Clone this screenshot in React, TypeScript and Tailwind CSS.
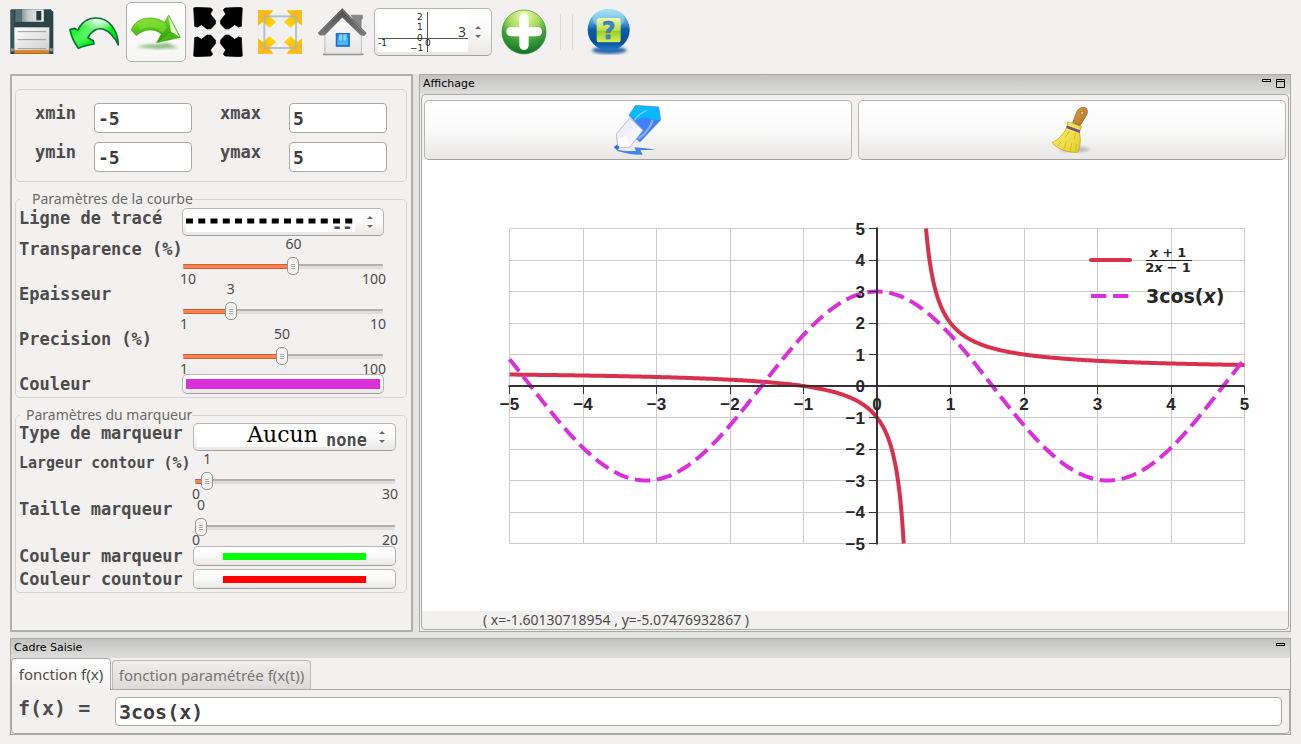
import { useState } from "react";
import type { ReactNode } from "react";

const mono = "font-['DejaVu_Sans_Mono',monospace] font-bold whitespace-nowrap text-[#4c4c4c]";
const raised =
  "rounded-[5px] border border-[#b8b6b3] border-b-[#a3a19e] bg-linear-to-b from-white via-[#fafafa] to-[#e8e7e5]";
const field =
  "min-w-0 rounded-[4px] border border-[#aaa8a5] bg-white px-[3px] font-['DejaVu_Sans_Mono',monospace] font-bold text-[#3c3c3c] outline-none";

/* ---------- icons ---------- */

function SaveIcon() {
  return (
    <svg width="44" height="46" viewBox="32 32 132 138">
      <defs>
        <linearGradient id="shutter" x1="0" x2="1">
          <stop offset="0" stopColor="#8d9a9a" />
          <stop offset=".3" stopColor="#c9cdcd" />
          <stop offset="1" stopColor="#f4f4f4" />
        </linearGradient>
        <linearGradient id="paper" x1="0" y1="0" x2="1" y2="1">
          <stop offset="0" stopColor="#fff" />
          <stop offset="1" stopColor="#cfcfcf" />
        </linearGradient>
      </defs>
      <path d="M36 33H154L162 41V167H33V36Z" fill="#2c4446" />
      <path d="M36 36H44V160H36Z" fill="#395658" />
      <rect x="48" y="33" width="86" height="38" fill="#557072" />
      <rect x="68" y="33" width="65" height="37" fill="url(#shutter)" />
      <rect x="111" y="38" width="15" height="28" fill="#2b3a3c" />
      <rect x="45" y="87" width="105" height="70" fill="url(#paper)" />
      <path d="M55 100H140M55 124H140M55 151H140" stroke="#9a9a9a" strokeWidth="3" />
      <rect x="45" y="156" width="105" height="10" fill="#e5801c" />
      <rect x="35" y="150" width="8" height="9" fill="#8fa0a0" />
      <rect x="152" y="150" width="8" height="9" fill="#8fa0a0" />
    </svg>
  );
}

function UndoIcon() {
  return (
    <svg width="50" height="34" viewBox="206 44 150 102">
      <defs>
        <linearGradient id="undo" x1="0" y1="1" x2=".7" y2="0">
          <stop offset=".2" stopColor="#00f80c" />
          <stop offset=".62" stopColor="#45f04e" />
          <stop offset=".85" stopColor="#d9fbd9" />
        </linearGradient>
        <linearGradient id="undoTail" x1="0" y1="0" x2="1" y2="1">
          <stop offset=".3" stopColor="#fff" stopOpacity="0" />
          <stop offset=".6" stopColor="#00ee10" />
        </linearGradient>
      </defs>
      <path
        d="M354 134C352 88 326 53 287 53C262 53 243 67 232 90L222 84L209 88C212 108 224 130 234 144C248 137 264 134 281 131L279 121L263 112C273 92 291 81 309 87C333 95 344 113 354 134Z"
        fill="url(#undo)"
      />
      <path
        d="M354 134C352 88 326 53 287 53C262 53 243 67 232 90L222 84L209 88C212 108 224 130 234 144C248 137 264 134 281 131L279 121L263 112C273 92 291 81 309 87C333 95 344 113 354 134Z"
        fill="url(#undoTail)"
        stroke="#0a6f3d"
        strokeWidth="5"
        strokeLinejoin="round"
      />
    </svg>
  );
}

function RedoIcon() {
  return (
    <svg width="52" height="40" viewBox="390 42 156 120">
      <defs>
        <linearGradient id="redo" x1="0" y1="0" x2=".3" y2="1">
          <stop offset="0" stopColor="#9be83a" />
          <stop offset=".5" stopColor="#58cc1a" />
          <stop offset="1" stopColor="#2f9a0c" />
        </linearGradient>
        <filter id="soft">
          <feGaussianBlur stdDeviation="4" />
        </filter>
      </defs>
      <path d="M408 147C440 136 470 142 500 134L536 150L470 153Z" fill="#8dbd80" filter="url(#soft)" />
      <path
        d="M393 96C404 70 427 58 453 60C474 61 487 69 494 73L506 51L541 118L470 134L484 108C462 90 432 92 409 113Z"
        fill="url(#redo)"
        stroke="#4aa81c"
        strokeWidth="2"
      />
      <path d="M412 74C440 56 470 64 494 76L500 90L488 104C466 84 440 84 420 96Z" fill="#8be63a" opacity=".55" />
      <path d="M505 53L513 101L539 118Z" fill="#e4f8c4" />
      <path d="M473 132L512 102L538 117Z" fill="#45b916" />
    </svg>
  );
}

const arrow =
  "M582 24L588 22L634 24L639 30L632 42L648 62L647 72L633 87L622 87L605 74L594 81L585 79Z";

function ExpandIcon() {
  return (
    <svg width="50" height="50" viewBox="580 21 150 150">
      <g stroke="#000" strokeWidth="2" strokeLinejoin="round">
        <path d={arrow} />
        <path d={arrow} transform="matrix(-1 0 0 1 1310 0)" />
        <path d={arrow} transform="matrix(1 0 0 -1 0 192)" />
        <path d={arrow} transform="matrix(-1 0 0 -1 1310 192)" />
      </g>
    </svg>
  );
}

const corner = "M774 29L821 30L807 46L828 65L808 83L789 64L774 76Z";

function FitIcon() {
  return (
    <svg width="46" height="46" viewBox="771 26 138 138">
      <defs>
        <linearGradient id="gold" x1="0" y1="0" x2="1" y2="1">
          <stop offset="0" stopColor="#ffb52e" />
          <stop offset=".4" stopColor="#fdbc0a" />
          <stop offset="1" stopColor="#ffe000" />
        </linearGradient>
      </defs>
      <g fill="url(#gold)">
        <path d={corner} />
        <path d={corner} transform="matrix(-1 0 0 1 1680 0)" />
        <path d={corner} transform="matrix(1 0 0 -1 0 190)" />
        <path d={corner} transform="matrix(-1 0 0 -1 1680 190)" />
      </g>
      <rect x="793" y="48" width="95" height="95" fill="none" stroke="#9fb3cb" strokeWidth="6" opacity=".75" />
    </svg>
  );
}

function HomeIcon() {
  return (
    <svg width="50" height="50" viewBox="20 21 152 150">
      <defs>
        <linearGradient id="wall" x1="0" y1="0" x2="0" y2="1">
          <stop offset="0" stopColor="#fff" />
          <stop offset="1" stopColor="#e6e6e6" />
        </linearGradient>
        <linearGradient id="pane" x1="0" y1="0" x2="0" y2="1">
          <stop offset="0" stopColor="#1f8de8" />
          <stop offset="1" stopColor="#48c8ff" />
        </linearGradient>
        <linearGradient id="roof" x1="0" y1="0" x2="0" y2="1">
          <stop offset="0" stopColor="#4c4c4c" />
          <stop offset="1" stopColor="#7c7c7c" />
        </linearGradient>
      </defs>
      <rect x="38" y="161" width="124" height="6" rx="3" fill="#8d8d8d" />
      <path d="M124 45H158V56H154V86L140 74Z" fill="#868a8a" stroke="#6e7272" strokeWidth="2" />
      <path d="M97 34L155 94V163H44V94Z" fill="url(#wall)" stroke="#a4a4a4" strokeWidth="2" />
      <path d="M97 24L171 99L164 108L152 106L97 52L44 106L29 107L22 99Z" fill="url(#roof)" />
      <path d="M97 29L161 94" stroke="#8f8f8f" strokeWidth="3" />
      <path d="M28 97L96 30" stroke="#777" strokeWidth="3" />
      <rect x="77" y="99" width="43" height="42" fill="#2b67cf" />
      <rect x="82" y="103" width="33" height="32" fill="url(#pane)" />
      <path d="M88 103H97V119L92 124L86 118ZM100 103H110V118L105 124L100 119Z" fill="#9fe2ff" opacity=".8" />
    </svg>
  );
}

function PlusIcon() {
  return (
    <svg width="46" height="46" viewBox="454 25 138 138">
      <defs>
        <radialGradient id="plus" cx=".5" cy=".12" r=".9">
          <stop offset="0" stopColor="#f0fbb0" />
          <stop offset=".4" stopColor="#a5d95c" />
          <stop offset=".65" stopColor="#3fa13b" />
          <stop offset="1" stopColor="#0f6d25" />
        </radialGradient>
      </defs>
      <circle cx="523" cy="94" r="66" fill="url(#plus)" stroke="#3f8c35" strokeWidth="2" />
      <path d="M484 93H563M523 53V134" stroke="#fff" strokeWidth="28" strokeLinecap="round" />
    </svg>
  );
}

function HelpIcon() {
  return (
    <svg width="46" height="50" viewBox="715 22 138 150">
      <defs>
        <linearGradient id="ball" x1="0" y1="0" x2="0" y2="1">
          <stop offset="0" stopColor="#9adcf5" />
          <stop offset=".35" stopColor="#3d97d6" />
          <stop offset=".5" stopColor="#0c5cab" />
          <stop offset=".8" stopColor="#0a4d99" />
          <stop offset="1" stopColor="#1b86cf" />
        </linearGradient>
        <linearGradient id="lime" x1="0" y1="0" x2="0" y2="1">
          <stop offset="0" stopColor="#eef9b4" />
          <stop offset=".5" stopColor="#b9e04c" />
          <stop offset=".55" stopColor="#9ccd1c" />
          <stop offset="1" stopColor="#d6ef62" />
        </linearGradient>
        <filter id="blurBall">
          <feGaussianBlur stdDeviation="4" />
        </filter>
      </defs>
      <ellipse cx="785" cy="152" rx="52" ry="11" fill="#2d64a8" filter="url(#blurBall)" />
      <circle cx="783" cy="90" r="63" fill="url(#ball)" />
      <ellipse cx="783" cy="58" rx="48" ry="29" fill="#d4f1fb" opacity=".35" />
      <rect x="747" y="55" width="72" height="73" rx="8" fill="url(#lime)" />
      <text
        x="783"
        y="118"
        textAnchor="middle"
        fontFamily="DejaVu Sans, sans-serif"
        fontSize="72"
        fontWeight="bold"
        fill="#3f83c0"
        stroke="#2c6ca8"
      >
        ?
      </text>
    </svg>
  );
}

function EraserIcon() {
  return (
    <svg width="50" height="52" viewBox="592 102 150 156">
      <defs>
        <linearGradient id="tip" x1="0" y1="0" x2="1" y2="1">
          <stop offset="0" stopColor="#e4e4fa" />
          <stop offset="1" stopColor="#fff" />
        </linearGradient>
      </defs>
      <path d="M660 106L729 111L735 150L673 216L661 206L681 180L640 136Z" fill="#3f80ff" stroke="#5a8ad8" strokeWidth="2" />
      <path d="M660 107L728 112L734 150L704 148L690 142L662 150L640 135Z" fill="#06b9fb" />
      <path d="M711 150C704 176 690 190 668 206" stroke="#8bb0ff" strokeWidth="7" fill="none" />
      <path d="M657 150C666 136 676 128 694 121" stroke="#6fd0ff" strokeWidth="4" fill="none" />
      <path d="M642 144L682 181L642 232L606 233L602 192Z" fill="url(#tip)" stroke="#a3a3cf" strokeWidth="2" />
      <path d="M607 208L634 196L642 231L608 232Z" fill="#fff" opacity=".8" />
      <path d="M603 238C618 244 640 243 661 243L656 232C680 234 700 236 720 240L674 240L681 254C655 255 630 250 605 243Z" fill="#3f86e8" />
      <path d="M594 232L603 224L612 231L605 241Z" fill="#2f6fe0" />
    </svg>
  );
}

function BroomIcon() {
  return (
    <svg width="42" height="48" viewBox="602 106 126 144">
      <defs>
        <linearGradient id="wood" x1="0" y1="0" x2="1" y2="1">
          <stop offset="0" stopColor="#dfa04c" />
          <stop offset="1" stopColor="#b3701a" />
        </linearGradient>
        <linearGradient id="straw" x1="0" y1="0" x2="1" y2="1">
          <stop offset="0" stopColor="#fdf47c" />
          <stop offset="1" stopColor="#e6cd24" />
        </linearGradient>
        <filter id="blurBroom">
          <feGaussianBlur stdDeviation="5" />
        </filter>
      </defs>
      <ellipse cx="672" cy="236" rx="46" ry="9" fill="#a9a9a9" opacity=".7" filter="url(#blurBroom)" />
      <path
        d="M667 156L679 124C685 110 700 107 708 113C714 121 711 132 704 141L689 165Z"
        fill="url(#wood)"
        stroke="#8e5a16"
        strokeWidth="2"
      />
      <circle cx="695" cy="127" r="4" fill="#fff" stroke="#8e5a16" strokeWidth="2" />
      <path
        d="M652 153L694 168L686 184C693 205 690 225 682 245C655 246 625 238 605 216C625 207 640 190 649 170Z"
        fill="url(#straw)"
        stroke="#b89c14"
        strokeWidth="2"
      />
      <path
        d="M622 227L633 212M640 237L648 212M660 242L664 218M676 240L678 220M658 182L645 200M676 186L672 206"
        stroke="#c4ac18"
        strokeWidth="2"
      />
      <path d="M649 168L689 183" stroke="#75508c" strokeWidth="8" />
    </svg>
  );
}

function Steppers() {
  return (
    <svg className="pointer-events-none absolute right-[9px] top-1/2 -translate-y-1/2" width="8" height="14" viewBox="0 0 8 14">
      <path d="M1 4L4 1L7 4Z" fill="#6a6a6a" />
      <path d="M1 10L4 13L7 10Z" fill="#6a6a6a" />
    </svg>
  );
}

/* ---------- form pieces ---------- */

function ToolButton({ label, active, children }: { label: string; active?: boolean; children: ReactNode }) {
  return (
    <button
      type="button"
      aria-label={label}
      className={
        active
          ? "flex size-15 shrink-0 items-center justify-center rounded-[5px] border border-[#b3b1ae] bg-linear-to-b from-white to-[#f6f6f5]"
          : "flex size-15 shrink-0 items-center justify-center"
      }
    >
      {children}
    </button>
  );
}

interface SliderProps {
  id: string;
  min: number;
  max: number;
  initial: number;
}

function Slider({ id, min, max, initial }: SliderProps) {
  const [value, setValue] = useState(initial);
  const ratio = (value - min) / (max - min);
  const pos = `calc(${ratio * 100}% + ${6 - ratio * 12}px)`;

  return (
    <div className="px-px text-sm leading-3 text-[#4c4c4c]">
      <div className="flex h-3">
        <div style={{ width: pos }} className="shrink-0" />
        <output htmlFor={id} className="flex w-0 justify-center">
          {value}
        </output>
      </div>
      <input
        id={id}
        type="range"
        min={min}
        max={max}
        value={value}
        onChange={(e) => setValue(Number(e.target.value))}
        style={{
          backgroundImage:
            "linear-gradient(#d65a2c 20%, #f58353 20% 80%, #d65a2c 80%), linear-gradient(#b3b1ae 40%, #e0dedc 40%)",
          backgroundSize: `${pos} 5px, 100% 5px`,
        }}
        className="mt-[7px] block h-[18px] w-full appearance-none rounded-full bg-transparent bg-left bg-no-repeat outline-none [&::-webkit-slider-thumb]:h-[18px] [&::-webkit-slider-thumb]:w-3 [&::-webkit-slider-thumb]:appearance-none [&::-webkit-slider-thumb]:rounded-[5px] [&::-webkit-slider-thumb]:border [&::-webkit-slider-thumb]:border-[#96948f] [&::-webkit-slider-thumb]:bg-[#f4f3f2] [&::-webkit-slider-thumb]:bg-[repeating-linear-gradient(#aaa_0_1px,#f4f3f2_1px_2px)] [&::-webkit-slider-thumb]:bg-[length:4px_5px] [&::-webkit-slider-thumb]:bg-center [&::-webkit-slider-thumb]:bg-no-repeat"
      />
      <div className="-mx-[3px] flex h-2 justify-between leading-2">
        <span>{min}</span>
        <span>{max}</span>
      </div>
    </div>
  );
}

function LimitField({ id, value }: { id: string; value: string }) {
  return (
    <>
      <label htmlFor={id} className={`text-[17px] leading-5 ${mono}`}>
        {id}
      </label>
      <input id={id} defaultValue={value} className={`h-[30px] w-[98px] text-lg ${field}`} />
    </>
  );
}

function ColorButton({ id, wide, color }: { id: string; wide?: boolean; color: string }) {
  return (
    <button
      id={id}
      type="button"
      className={`flex h-5 w-full items-center justify-center ${wide ? "px-[3px]" : "px-[29px]"} ${raised}`}
    >
      <span
        className={wide ? "h-[10px] w-full" : "h-[7px] w-full"}
        style={{ backgroundColor: color }}
      />
    </button>
  );
}

/* ---------- chart ---------- */

const ticks = [-5, -4, -3, -2, -1, 0, 1, 2, 3, 4, 5];
const px = (x: number) => 455 + x * 73.5;
const py = (y: number) => 226 - y * 31.5;
const sign = (n: number) => (n < 0 ? `−${-n}` : `${n}`);

function curve(fn: (x: number) => number, from: number, to: number, steps = 300) {
  const pts: string[] = [];
  for (let i = 0; i <= steps; i++) {
    const x = from + ((to - from) * i) / steps;
    pts.push(`${px(x).toFixed(2)},${py(fn(x)).toFixed(2)}`);
  }
  return pts.join(" ");
}

const homographic = (x: number) => (x + 1) / (2 * x - 1);
const cosine = (x: number) => 3 * Math.cos(x);

function Chart() {
  return (
    <svg className="min-h-0 w-full flex-1" viewBox="0 0 866 451" role="img" aria-label="Courbes">
      <g stroke="#cbcbcb" shapeRendering="crispEdges">
        {ticks.map((t) => (
          <g key={t}>
            <line x1={px(t)} x2={px(t)} y1={py(5)} y2={py(-5)} />
            <line x1={px(-5)} x2={px(5)} y1={py(t)} y2={py(t)} />
          </g>
        ))}
      </g>
      <g fill="none" strokeWidth="4" strokeLinejoin="round">
        <polyline points={curve(homographic, -5, 4 / 11)} stroke="#d9304c" />
        <polyline points={curve(homographic, 2 / 3, 5)} stroke="#d9304c" />
        <polyline points={curve(cosine, -5, 5)} stroke="#da2fda" strokeDasharray="15.4 6.7" />
      </g>
      <g stroke="#333" strokeWidth="2">
        <line x1={px(-5) - 1} x2={px(5)} y1={py(0)} y2={py(0)} />
        <line x1={px(0)} x2={px(0)} y1={py(5) - 1} y2={py(-5) + 1} />
      </g>
      <g stroke="#333" shapeRendering="crispEdges">
        {ticks.map((t) => (
          <g key={t}>
            <line x1={px(t)} x2={px(t)} y1={py(0)} y2={py(0) + 8} />
            <line x1={px(0) - 8} x2={px(0)} y1={py(t)} y2={py(t)} />
          </g>
        ))}
      </g>
      <g fontFamily="Liberation Sans, Arial, sans-serif" fontSize="17" fontWeight="bold" fill="#262626">
        {ticks.map((t) => (
          <g key={t}>
            <text x={px(t)} y={py(0) + 24} textAnchor="middle">
              {sign(t)}
            </text>
            <text x={px(0) - 12} y={py(t) + 6} textAnchor="end">
              {sign(t)}
            </text>
          </g>
        ))}
      </g>

      {/* legend */}
      <g strokeWidth="4">
        <line x1="669" x2="708" y1="100" y2="100" stroke="#d9304c" strokeLinecap="round" />
        <line x1="669" x2="707" y1="136" y2="136" stroke="#da2fda" strokeDasharray="15.4 6.7" />
      </g>
      <g fontFamily="DejaVu Sans, sans-serif" fontWeight="bold" fill="#262626">
        <g fontSize="13">
          <text x="746" y="97" textAnchor="middle">
            <tspan fontStyle="oblique">x</tspan>
            <tspan dx="4">+</tspan>
            <tspan dx="4">1</tspan>
          </text>
          <text x="746" y="112" textAnchor="middle">
            2<tspan fontStyle="oblique">x</tspan>
            <tspan dx="4">−</tspan>
            <tspan dx="4">1</tspan>
          </text>
        </g>
        <line x1="724" x2="770" y1="100.5" y2="100.5" stroke="#262626" />
        <text x="724" y="143" fontSize="19">
          3cos(<tspan fontStyle="oblique">x</tspan>)
        </text>
      </g>
    </svg>
  );
}

/* ---------- docks ---------- */

function TitleBar({ title, children }: { title: string; children: ReactNode }) {
  return (
    <div className="flex h-[19px] shrink-0 items-start justify-between bg-linear-to-b from-[#c2c2c0] to-[#dededc] pl-[3px] pr-[5px] font-['DejaVu_Sans',sans-serif] text-[11px] leading-[17px] text-black">
      <span>{title}</span>
      <div className="flex items-start gap-[5px] pt-1">{children}</div>
    </div>
  );
}

function MinimizeButton() {
  return (
    <button type="button" aria-label="Réduire" className="flex">
      <svg width="9" height="9" viewBox="0 0 9 9">
        <rect x=".5" y=".5" width="8" height="2" fill="none" stroke="#000" />
      </svg>
    </button>
  );
}

function MaximizeButton() {
  return (
    <button type="button" aria-label="Agrandir" className="flex">
      <svg width="9" height="9" viewBox="0 0 9 9">
        <path d="M.5 .5H8.5V8.5H.5ZM.5 2.5H8.5" fill="none" stroke="#000" />
      </svg>
    </button>
  );
}

function Toolbar() {
  return (
    <div className="mb-[10px] flex h-16 shrink-0 items-center gap-0.5 px-0.5">
      <ToolButton label="Enregistrer">
        <SaveIcon />
      </ToolButton>
      <ToolButton label="Annuler">
        <UndoIcon />
      </ToolButton>
      <ToolButton label="Rétablir" active>
        <RedoIcon />
      </ToolButton>
      <ToolButton label="Étendre">
        <ExpandIcon />
      </ToolButton>
      <ToolButton label="Ajuster">
        <FitIcon />
      </ToolButton>
      <ToolButton label="Accueil">
        <HomeIcon />
      </ToolButton>
      <div className={`relative h-12 w-[118px] ${raised}`}>
        <svg className="absolute left-[3px] top-[3px]" width="90" height="40" viewBox="0 0 90 40">
          <rect width="90" height="40" fill="#fff" />
          <path d="M0 26.500H90M49.500 0V40" stroke="#555" />
          <g fontFamily="DejaVu Sans, sans-serif" fontSize="9" fill="#222">
            <text x="39" y="8">2</text>
            <text x="39" y="18">1</text>
            <text x="39" y="29">0</text>
            <text x="32" y="39">−1</text>
            <text x="0" y="34">-1</text>
            <text x="47" y="34">0</text>
          </g>
        </svg>
        <select
          aria-label="Type de repère"
          className="relative size-full appearance-none bg-transparent pl-[83px] font-['Noto_Sans',sans-serif] text-sm text-[#3c3c3c] outline-none"
        >
          <option>3</option>
        </select>
        <Steppers />
      </div>
      <ToolButton label="Ajouter">
        <PlusIcon />
      </ToolButton>
      <div className="mx-1 h-9 w-[13px] border-x border-[#d9d7d4]" />
      <ToolButton label="Aide">
        <HelpIcon />
      </ToolButton>
    </div>
  );
}

function CurveSettings() {
  const label = `w-[163px] shrink-0 text-[17px] ${mono}`;
  return (
    <fieldset className="mt-2 rounded-[5px] border border-[#d6d4d1] pb-[3px]">
      <legend className="ml-1 pl-3 text-sm leading-[18px] text-[#6a6a6a]">Paramètres de la courbe</legend>
      <div className="flex flex-col pl-[3px] pr-[22px]">
        <div className="mb-0.5 flex items-start">
          <label htmlFor="ligne" className={`leading-5 ${label}`}>
            Ligne de tracé
          </label>
          <div className={`relative h-7 min-w-0 flex-1 ${raised}`}>
            <svg className="absolute left-[3px] top-1" width="169" height="19" viewBox="0 0 169 19">
              <rect width="169" height="19" fill="#fff" />
              <line x1="0" x2="169" y1="8" y2="8" stroke="#000" strokeWidth="5" strokeDasharray="7 5.25" />
            </svg>
            <select
              id="ligne"
              className="relative size-full appearance-none bg-transparent pl-[149px] pt-1.5 font-['DejaVu_Sans_Mono',monospace] text-[17px] font-bold text-[#4c4c4c] outline-none"
            >
              <option>--</option>
            </select>
            <Steppers />
          </div>
        </div>
        <div className="flex items-start">
          <label htmlFor="transparence" className={`leading-[22px] ${label}`}>
            Transparence (%)
          </label>
          <div className="flex-1">
            <Slider id="transparence" min={10} max={100} initial={60} />
          </div>
        </div>
        <div className="flex items-start">
          <label htmlFor="epaisseur" className={`leading-[22px] ${label}`}>
            Epaisseur
          </label>
          <div className="flex-1">
            <Slider id="epaisseur" min={1} max={10} initial={3} />
          </div>
        </div>
        <div className="mb-px flex items-start">
          <label htmlFor="precision" className={`leading-[22px] ${label}`}>
            Precision (%)
          </label>
          <div className="flex-1">
            <Slider id="precision" min={1} max={100} initial={50} />
          </div>
        </div>
        <div className="flex items-start">
          <label htmlFor="couleur" className={`leading-5 ${label}`}>
            Couleur
          </label>
          <div className="flex-1">
            <ColorButton id="couleur" wide color="#da2fda" />
          </div>
        </div>
      </div>
    </fieldset>
  );
}

function MarkerSettings() {
  const label = `w-[174px] shrink-0 leading-5 ${mono}`;
  return (
    <fieldset className="mt-[9px] rounded-[5px] border border-[#d6d4d1] pb-[3px]">
      <legend className="ml-1 pl-1.5 text-sm leading-4 text-[#6a6a6a]">Paramètres du marqueur</legend>
      <div className="flex flex-col pl-[3px] pr-[10px]">
        <div className="mb-0.5 flex items-start">
          <label htmlFor="marqueur" className={`text-[17px] ${label}`}>
            Type de marqueur
          </label>
          <div className={`relative h-7 min-w-0 flex-1 ${raised}`}>
            <div className="absolute left-[3px] top-[3px] flex h-5 w-[171px] justify-center bg-white font-['DejaVu_Serif',serif] text-[22px] leading-4 text-black">
              Aucun
            </div>
            <select
              id="marqueur"
              className="relative size-full appearance-none bg-transparent pl-[132px] pt-1 font-['DejaVu_Sans_Mono',monospace] text-[17px] font-bold text-[#4c4c4c] outline-none"
            >
              <option>none</option>
            </select>
            <Steppers />
          </div>
        </div>
        <div className="mb-px flex items-start">
          <label htmlFor="contour" className={`text-[15px] ${label}`}>
            Largeur contour (%)
          </label>
          <div className="flex-1 pl-px">
            <Slider id="contour" min={0} max={30} initial={1} />
          </div>
        </div>
        <div className="mb-0.5 flex items-start">
          <label htmlFor="taille" className={`text-[17px] ${label}`}>
            Taille marqueur
          </label>
          <div className="flex-1 pl-px">
            <Slider id="taille" min={0} max={20} initial={0} />
          </div>
        </div>
        <div className="mb-[3px] flex items-start">
          <label htmlFor="couleur-marqueur" className={`text-[17px] ${label}`}>
            Couleur marqueur
          </label>
          <div className="flex-1">
            <ColorButton id="couleur-marqueur" color="#00ff00" />
          </div>
        </div>
        <div className="flex items-start">
          <label htmlFor="couleur-contour" className={`text-[17px] ${label}`}>
            Couleur countour
          </label>
          <div className="flex-1">
            <ColorButton id="couleur-contour" color="#ff0000" />
          </div>
        </div>
      </div>
    </fieldset>
  );
}

export default function App() {
  return (
    <div className="flex min-h-screen flex-col bg-[#f2f1ef] font-['Noto_Sans',sans-serif]">
      <Toolbar />

      <div className="mx-[10px] mb-[10px] flex flex-1 flex-col gap-1.5 bg-[#e4e4e2]">
        <div className="flex flex-1 gap-1.5">
          <aside className="w-[403px] shrink-0 border-2 border-[#b0afad] bg-[#f2f1ef] pl-[3px] pr-1 pt-[13px]">
            <div className="grid grid-cols-[59px_126px_69px_98px] items-start gap-y-[9px] rounded-[5px] border border-[#d6d4d1] pb-[9px] pl-[19px] pt-[13px]">
              <LimitField id="xmin" value="-5" />
              <LimitField id="xmax" value="5" />
              <LimitField id="ymin" value="-5" />
              <LimitField id="ymax" value="5" />
            </div>
            <CurveSettings />
            <MarkerSettings />
          </aside>

          <section className="flex min-w-0 flex-1 flex-col border border-[#a9a9a7] bg-[#f2f1ef]">
            <TitleBar title="Affichage">
              <MinimizeButton />
              <MaximizeButton />
            </TitleBar>
            <div className="mx-px mb-px flex min-h-0 flex-1 flex-col rounded-[4px] border border-[#a9a9a7]">
              <div className="flex gap-1.5 px-0.5 pt-[5px]">
                <button type="button" aria-label="Tracer" className={`flex h-[60px] flex-1 items-center justify-center ${raised}`}>
                  <EraserIcon />
                </button>
                <button type="button" aria-label="Effacer" className={`flex h-[60px] flex-1 items-center justify-center ${raised}`}>
                  <BroomIcon />
                </button>
              </div>
              <div className="flex min-h-0 flex-1 bg-white">
                <Chart />
              </div>
              <div className="h-[18px] shrink-0 pl-[61px] text-sm leading-[18px] text-[#4c4c4c]">
                ( x=-1.60130718954 , y=-5.07476932867 )
              </div>
            </div>
          </section>
        </div>

        <section className="shrink-0 border border-[#a9a9a7] bg-[#f2f1ef]">
          <TitleBar title="Cadre Saisie">
            <MinimizeButton />
          </TitleBar>
          <div role="tablist" className="flex items-end text-[15px]">
            <button
              type="button"
              role="tab"
              aria-selected="true"
              className="z-10 -mb-px h-8 w-[100px] rounded-t-[4px] border border-b-0 border-[#a9a9a7] bg-linear-to-b from-white to-[#f2f1ef] text-[#4c4c4c]"
            >
              fonction f(x)
            </button>
            <button
              type="button"
              role="tab"
              aria-selected="false"
              className="ml-px h-[29px] w-[199px] rounded-t-[4px] border border-b-0 border-[#bdbbb8] bg-linear-to-b from-[#efeeec] to-[#dcdbd8] text-[#757575]"
            >
              fonction paramétrée f(x(t))
            </button>
          </div>
          <form className="flex items-start rounded-b-[4px] border border-[#a9a9a7] p-[7px] pl-1.5">
            <label htmlFor="fx" className={`w-[97px] shrink-0 text-xl leading-[22px] ${mono}`}>
              f(x) =
            </label>
            <input id="fx" defaultValue="3cos(x)" className={`h-[29px] flex-1 text-xl ${field}`} />
          </form>
        </section>
      </div>
    </div>
  );
}
